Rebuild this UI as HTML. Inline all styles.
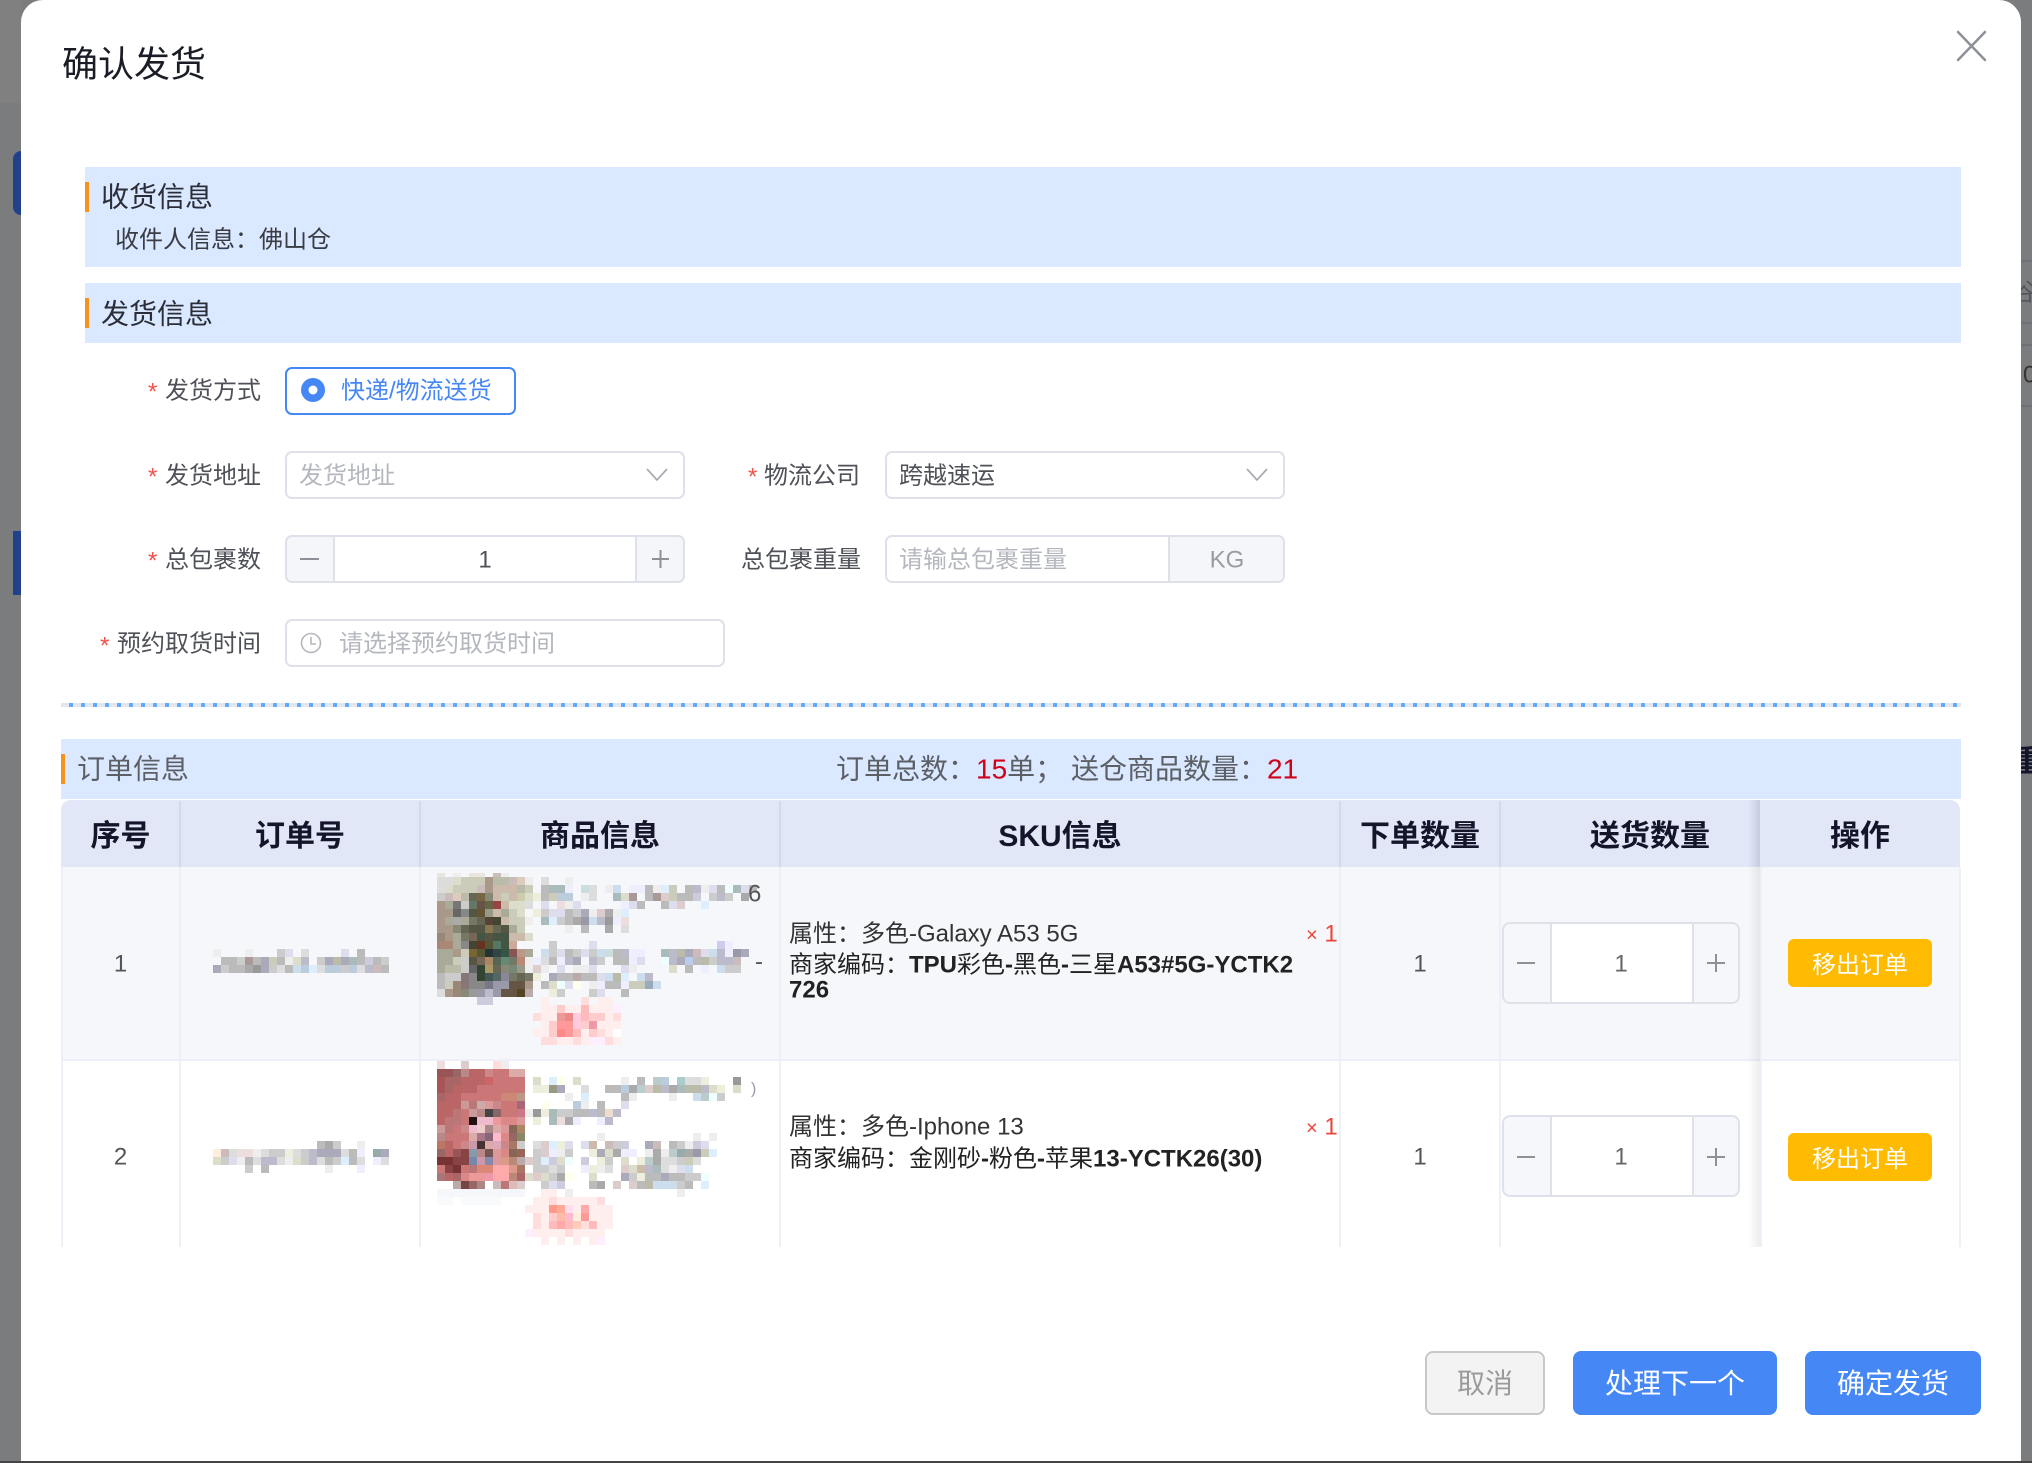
<!DOCTYPE html>
<html lang="zh-CN"><head><meta charset="utf-8"><title>确认发货</title>
<style>
*{box-sizing:border-box}
html,body{margin:0;padding:0}
body{width:2032px;height:1463px;position:relative;overflow:hidden;background:#7b7c7e;font-family:"Liberation Sans","Noto Sans CJK SC",sans-serif}
.a{position:absolute}
.t{position:absolute;white-space:nowrap;line-height:1;color:#4f5158;font-size:24px;transform:translateY(1.5px)}
.r{text-align:right}
.c{text-align:center}
.bar{position:absolute;background:#dae9ff}
.or{position:absolute;width:4px;height:30px;background:#f5941d}
.box{position:absolute;background:#fff;border:2.5px solid #dfe1ea;border-radius:7px}
.star{color:#f0524a}
.ph{color:#b5b7bf}
.th{position:absolute;top:821.5px;font-size:30px;font-weight:700;color:#14142b;line-height:30px;text-align:center;white-space:nowrap}
.sep{position:absolute;width:2px;top:801px;height:66px;background:#d3d9ea}
.col{position:absolute;width:2px;top:867px;height:380px;background:#eef0f7}
.btn{position:absolute;display:flex;align-items:center;justify-content:center;font-size:28px;border-radius:8px;color:#fff;background:#4687f6;padding-bottom:2px}
.ybtn{position:absolute;left:1788px;width:144px;height:48px;background:#febb02;border-radius:6px;color:#fff;font-size:24px;display:flex;align-items:center;justify-content:center;padding-bottom:2px}
.cnt{position:absolute;left:1502px;width:238px;height:82px;background:#f6f7fb;border:2.5px solid #dfe1ea;border-radius:8px;overflow:hidden}
.cnt i{position:absolute;left:46px;top:0;bottom:0;width:144px;background:#fff;border-left:2.5px solid #dfe1ea;border-right:2.5px solid #dfe1ea}
.m{position:absolute;left:437px;width:336px;height:186px;shape-rendering:crispEdges}
.m rect{width:1px;height:1px}
.n{position:absolute;left:213px;width:176px;height:32px;shape-rendering:crispEdges}
.n rect{width:1px;height:1px}
.sku b{font-weight:700;color:#222}
</style></head><body>

<div class="a" style="left:0;top:0;width:21px;height:103px;background:#808080"></div>
<div class="a" style="left:13px;top:151px;width:8px;height:64px;background:#23408a;border-radius:8px 0 0 8px"></div>
<div class="a" style="left:13px;top:531px;width:8px;height:64px;background:#23408a"></div>
<div class="a" style="left:2021px;top:260px;width:11px;height:2px;background:#6f7078"></div>
<div class="a" style="left:2021px;top:322px;width:11px;height:2px;background:#6f7078"></div>
<div class="a" style="left:2021px;top:344px;width:11px;height:2px;background:#6f7078"></div>
<div class="a" style="left:2021px;top:405px;width:11px;height:2px;background:#6f7078"></div>
<div class="t" style="left:2012px;top:280px;color:#55565a;font-size:24px">谷</div>
<div class="t" style="left:2023px;top:362px;color:#333;font-size:24px">0</div>
<div class="t" style="left:2012px;top:746px;color:#14142b;font-size:30px;font-weight:700">重</div>
<div class="a" style="left:0;top:1461px;width:2032px;height:2px;background:#444"></div>

<div class="a" style="left:21px;top:0;width:2000px;height:1461px;background:#fff;border-radius:22px 22px 0 0"></div>

<div class="t" style="left:62px;top:45px;font-size:36px;color:#1a1d26">确认发货</div>
<svg class="a" style="left:1950px;top:26px" width="42" height="42"><path d="M8 6 L35 34 M35 6 L8 34" stroke="#8d9096" stroke-width="2.5" fill="none" stroke-linecap="round"/></svg>

<div class="bar" style="left:85px;top:167px;width:1876px;height:100px"></div>
<div class="or" style="left:85px;top:182px"></div>
<div class="t" style="left:101px;top:182px;font-size:28px;color:#2b2e38">收货信息</div>
<div class="t" style="left:115px;top:227px;color:#3a3c45">收件人信息：佛山仓</div>

<div class="bar" style="left:85px;top:283px;width:1876px;height:60px"></div>
<div class="or" style="left:85px;top:298px"></div>
<div class="t" style="left:101px;top:299px;font-size:28px;color:#2b2e38">发货信息</div>

<div class="t" style="left:148px;top:379px"><span class="star">*</span></div>
<div class="t r" style="right:1771px;top:378px">发货方式</div>
<div class="a" style="left:285px;top:367px;width:231px;height:48px;border:2.5px solid #4687f6;border-radius:7px;background:#fff"></div>
<svg class="a" style="left:300px;top:377px" width="26" height="26"><circle cx="13" cy="13" r="12" fill="#4687f6"/><circle cx="13" cy="13" r="4.5" fill="#fff"/></svg>
<div class="t" style="left:341px;top:378px;color:#4687f6">快递/物流送货</div>

<div class="t" style="left:148px;top:464px"><span class="star">*</span></div>
<div class="t r" style="right:1771px;top:463px">发货地址</div>
<div class="box" style="left:285px;top:451px;width:400px;height:48px"></div>
<div class="t ph" style="left:299px;top:463px">发货地址</div>
<svg class="a" style="left:645px;top:466px" width="24" height="18"><path d="M2 3 L12 14 L22 3" stroke="#a9abb3" stroke-width="1.7" fill="none"/></svg>

<div class="t" style="left:748px;top:464px"><span class="star">*</span></div>
<div class="t r" style="right:1172px;top:463px">物流公司</div>
<div class="box" style="left:885px;top:451px;width:400px;height:48px"></div>
<div class="t" style="left:899px;top:463px;color:#4f5158">跨越速运</div>
<svg class="a" style="left:1245px;top:466px" width="24" height="18"><path d="M2 3 L12 14 L22 3" stroke="#a9abb3" stroke-width="1.7" fill="none"/></svg>

<div class="t" style="left:148px;top:548px"><span class="star">*</span></div>
<div class="t r" style="right:1771px;top:547px">总包裹数</div>
<div class="box" style="left:285px;top:535px;width:400px;height:48px;background:#f5f6fa;overflow:hidden"><div class="a" style="left:46px;top:0;bottom:0;width:304px;background:#fff;border-left:2.5px solid #dfe1ea;border-right:2.5px solid #dfe1ea"></div></div>
<svg class="a" style="left:300px;top:549px" width="370" height="20"><path d="M0 10H19M352 10H369M360.5 1V19" stroke="#8e9097" stroke-width="2" fill="none"/></svg>
<div class="t c" style="left:385px;width:200px;top:547px;color:#4f5158">1</div>

<div class="t r" style="right:1171px;top:547px">总包裹重量</div>
<div class="box" style="left:885px;top:535px;width:400px;height:48px;overflow:hidden"><div class="a" style="left:281px;top:0;bottom:0;right:0;background:#f5f6fa;border-left:2.5px solid #dfe1ea"></div></div>
<div class="t ph" style="left:899px;top:547px">请输总包裹重量</div>
<div class="t c" style="left:1170px;width:114px;top:547px;color:#9a9ca4">KG</div>

<div class="t" style="left:100px;top:633px"><span class="star">*</span></div>
<div class="t r" style="right:1771px;top:631px">预约取货时间</div>
<div class="box" style="left:285px;top:619px;width:440px;height:48px"></div>
<svg class="a" style="left:300px;top:632px" width="22" height="22"><circle cx="11" cy="11" r="9.5" stroke="#b5b7bf" stroke-width="1.6" fill="none"/><path d="M11 5V12H16" stroke="#b5b7bf" stroke-width="1.6" fill="none"/></svg>
<div class="t ph" style="left:339px;top:631px">请选择预约取货时间</div>

<div class="a" style="left:61px;top:703px;width:1900px;height:4px;background:repeating-linear-gradient(90deg,#e4e6ed 0,#e4e6ed 8px,#65a8ff 8px,#65a8ff 12px)"></div>

<div class="bar" style="left:61px;top:739px;width:1900px;height:60px"></div>
<div class="or" style="left:61px;top:754px"></div>
<div class="t" style="left:77px;top:754px;font-size:28px;color:#5c5f66">订单信息</div>
<div class="t" style="left:836px;top:754px;font-size:28px;color:#5c5f66">订单总数：<span style="color:#d0021b">15</span>单； 送仓商品数量：<span style="color:#d0021b">21</span></div>

<!-- table -->
<div class="a" style="left:61px;top:867px;width:1899px;height:193px;background:#f5f7fb"></div>
<div class="a" style="left:61px;top:1059px;width:1899px;height:2px;background:#eeeff6"></div>
<div class="a" style="left:61px;top:800px;width:1899px;height:67px;background:#e1e7f7;border-radius:10px 10px 0 0"></div>
<div class="a" style="left:1748px;top:800px;width:12px;height:67px;background:linear-gradient(90deg,rgba(150,155,180,0),rgba(150,155,180,.35))"></div>
<div class="a" style="left:1748px;top:867px;width:12px;height:380px;background:linear-gradient(90deg,rgba(0,0,0,0),rgba(0,0,0,.07))"></div>
<div class="sep" style="left:179px"></div><div class="sep" style="left:419px"></div><div class="sep" style="left:779px"></div><div class="sep" style="left:1339px"></div><div class="sep" style="left:1499px"></div>
<div class="col" style="left:61px"></div><div class="col" style="left:179px"></div><div class="col" style="left:419px"></div><div class="col" style="left:779px"></div><div class="col" style="left:1339px"></div><div class="col" style="left:1499px"></div><div class="col" style="left:1760px"></div><div class="col" style="left:1959px"></div>

<div class="th" style="left:61px;width:119px">序号</div>
<div class="th" style="left:180px;width:240px">订单号</div>
<div class="th" style="left:420px;width:360px">商品信息</div>
<div class="th" style="left:780px;width:560px">SKU信息</div>
<div class="th" style="left:1340px;width:160px">下单数量</div>
<div class="th" style="left:1500px;width:300px">送货数量</div>
<div class="th" style="left:1760px;width:200px">操作</div>

<div class="t c" style="left:61px;width:119px;top:951px;color:#555">1</div>
<div class="t c" style="left:61px;width:119px;top:1144px;color:#555">2</div>

<svg class="n" style="top:949px" viewBox="0 0 22 4"><g><rect x="0" fill="#eee"/><rect x="4" fill="#eee"/><rect x="8" fill="#ccc"/><rect x="9" fill="#dde"/><rect x="11" fill="#ddd"/><rect x="16" fill="#dde"/><rect x="18" fill="#bbb"/></g><g transform="translate(0 1)"><rect x="1" fill="#bbb"/><rect x="2" fill="#bbb"/><rect x="3" fill="#ccc"/><rect x="4" fill="#a99"/><rect x="5" fill="#bbb"/><rect x="6" fill="#aab"/><rect x="7" fill="#ccb"/><rect x="8" fill="#bbb"/><rect x="9" fill="#eee"/><rect x="10" fill="#ddc"/><rect x="11" fill="#bbc"/><rect x="13" fill="#ccc"/><rect x="14" fill="#aab"/><rect x="15" fill="#bba"/><rect x="16" fill="#aab"/><rect x="17" fill="#abb"/><rect x="18" fill="#bbb"/><rect x="19" fill="#ccd"/><rect x="20" fill="#bbb"/><rect x="21" fill="#ccc"/></g><g transform="translate(0 2)"><rect x="0" fill="#aab"/><rect x="1" fill="#ccc"/><rect x="2" fill="#bbb"/><rect x="3" fill="#bbb"/><rect x="4" fill="#aaa"/><rect x="5" fill="#999"/><rect x="6" fill="#aab"/><rect x="7" fill="#ccc"/><rect x="8" fill="#ddd"/><rect x="9" fill="#bbb"/><rect x="10" fill="#cde"/><rect x="11" fill="#bcd"/><rect x="12" fill="#def"/><rect x="13" fill="#ddd"/><rect x="14" fill="#bcd"/><rect x="15" fill="#bcd"/><rect x="16" fill="#ccc"/><rect x="17" fill="#bcd"/><rect x="18" fill="#ddd"/><rect x="19" fill="#bbc"/><rect x="20" fill="#cbb"/><rect x="21" fill="#bbb"/></g></svg>

<svg class="n" style="top:1141px" viewBox="0 0 22 4"><g><rect x="13" fill="#bbb"/><rect x="14" fill="#aaa"/><rect x="15" fill="#ccc"/><rect x="18" fill="#eee"/></g><g transform="translate(0 1)"><rect x="0" fill="#fed"/><rect x="1" fill="#cbb"/><rect x="2" fill="#ddd"/><rect x="3" fill="#edd"/><rect x="4" fill="#edd"/><rect x="5" fill="#eee"/><rect x="6" fill="#ddd"/><rect x="7" fill="#ccc"/><rect x="8" fill="#ccc"/><rect x="9" fill="#eed"/><rect x="10" fill="#ddd"/><rect x="11" fill="#ccc"/><rect x="12" fill="#bbc"/><rect x="13" fill="#aab"/><rect x="14" fill="#aab"/><rect x="15" fill="#aab"/><rect x="16" fill="#ddd"/><rect x="17" fill="#bbb"/><rect x="18" fill="#eef"/><rect x="20" fill="#9aa"/><rect x="21" fill="#aab"/></g><g transform="translate(0 2)"><rect x="0" fill="#ddc"/><rect x="1" fill="#ccc"/><rect x="2" fill="#dde"/><rect x="3" fill="#eee"/><rect x="4" fill="#bbb"/><rect x="5" fill="#ddd"/><rect x="6" fill="#bbc"/><rect x="7" fill="#bbc"/><rect x="8" fill="#ddd"/><rect x="9" fill="#eee"/><rect x="10" fill="#ddc"/><rect x="11" fill="#ccc"/><rect x="12" fill="#bbc"/><rect x="13" fill="#ddd"/><rect x="14" fill="#bbb"/><rect x="15" fill="#ccc"/><rect x="16" fill="#def"/><rect x="17" fill="#bbb"/><rect x="18" fill="#ddd"/><rect x="20" fill="#eef"/><rect x="21" fill="#ddd"/></g><g transform="translate(0 3)"><rect x="4" fill="#ccc"/><rect x="6" fill="#bbb"/><rect x="14" fill="#eee"/><rect x="18" fill="#eef"/></g></svg>

<!-- row 1 product -->
<svg class="m" style="top:861px" viewBox="0 0 42 23.25">
<g transform="translate(0 1.5)"><rect style="height:.5px" x="0" fill="#e8e6e0"/><rect style="height:.5px" x="2" fill="#eee"/><rect style="height:.5px" x="4" fill="#e8e6df"/><rect style="height:.5px" x="5" fill="#e8e6df"/><rect style="height:.5px" x="7" fill="#c8c0b8"/><rect style="height:.5px" x="8" fill="#eee"/></g>
<g transform="translate(0 2)"><rect x="0" fill="#ddd"/><rect x="1" fill="#ddd"/><rect x="2" fill="#ddc"/><rect x="3" fill="#ccb"/><rect x="4" fill="#ccb"/><rect x="5" fill="#ccb"/><rect x="6" fill="#a98"/><rect x="7" fill="#bba"/><rect x="8" fill="#bba"/><rect x="9" fill="#cbb"/><rect x="10" fill="#dcb"/><rect x="11" fill="#eee"/><rect x="13" fill="#ddd"/><rect x="16" fill="#eee"/></g>
<g transform="translate(0 3)"><rect x="0" fill="#ddd"/><rect x="1" fill="#ddc"/><rect x="2" fill="#ccb"/><rect x="3" fill="#ccb"/><rect x="4" fill="#ccb"/><rect x="5" fill="#cbb"/><rect x="6" fill="#a98"/><rect x="7" fill="#cba"/><rect x="8" fill="#cba"/><rect x="9" fill="#cba"/><rect x="10" fill="#bba"/><rect x="11" fill="#ccb"/><rect x="13" fill="#bbb"/><rect x="14" fill="#abb"/><rect x="15" fill="#abb"/><rect x="16" fill="#eef"/><rect x="18" fill="#cdd"/><rect x="19" fill="#ddd"/><rect x="21" fill="#eee"/><rect x="22" fill="#cde"/><rect x="24" fill="#eef"/><rect x="25" fill="#eef"/><rect x="26" fill="#bbb"/><rect x="27" fill="#eee"/><rect x="28" fill="#def"/><rect x="29" fill="#ccb"/><rect x="31" fill="#bbb"/><rect x="32" fill="#bbc"/><rect x="33" fill="#eee"/><rect x="34" fill="#dde"/><rect x="35" fill="#bbb"/><rect x="36" fill="#eff"/><rect x="37" fill="#abb"/><rect x="38" fill="#dde"/><rect x="39" fill="#bbb"/></g>
<g transform="translate(0 4)"><rect x="0" fill="#ccc"/><rect x="1" fill="#cbb"/><rect x="2" fill="#dcb"/><rect x="3" fill="#bba"/><rect x="4" fill="#665"/><rect x="5" fill="#764"/><rect x="6" fill="#887"/><rect x="7" fill="#cba"/><rect x="8" fill="#ccb"/><rect x="9" fill="#cba"/><rect x="10" fill="#cca"/><rect x="11" fill="#ddc"/><rect x="12" fill="#eed"/><rect x="13" fill="#bbb"/><rect x="14" fill="#ccb"/><rect x="15" fill="#bcd"/><rect x="16" fill="#bcd"/><rect x="18" fill="#eee"/><rect x="19" fill="#ddd"/><rect x="22" fill="#abb"/><rect x="23" fill="#ddc"/><rect x="24" fill="#a99"/><rect x="26" fill="#bbb"/><rect x="27" fill="#a99"/><rect x="28" fill="#dcc"/><rect x="29" fill="#ccb"/><rect x="30" fill="#bbb"/><rect x="31" fill="#bbb"/><rect x="32" fill="#ccd"/><rect x="34" fill="#ccc"/><rect x="35" fill="#bbc"/><rect x="36" fill="#ccc"/><rect x="38" fill="#aaa"/></g>
<g transform="translate(0 5)"><rect x="0" fill="#a98"/><rect x="1" fill="#aa9"/><rect x="2" fill="#777"/><rect x="3" fill="#ccc"/><rect x="4" fill="#676"/><rect x="5" fill="#654"/><rect x="6" fill="#664"/><rect x="7" fill="#944"/><rect x="8" fill="#cba"/><rect x="9" fill="#ddc"/><rect x="10" fill="#ddc"/><rect x="11" fill="#ddd"/><rect x="13" fill="#dde"/><rect x="15" fill="#edd"/><rect x="16" fill="#eee"/><rect x="17" fill="#dde"/><rect x="23" fill="#eef"/><rect x="24" fill="#dde"/><rect x="25" fill="#bbb"/><rect x="28" fill="#bbb"/><rect x="29" fill="#dde"/><rect x="30" fill="#dcc"/><rect x="33" fill="#def"/></g>
<g transform="translate(0 6)"><rect x="0" fill="#a98"/><rect x="1" fill="#a98"/><rect x="2" fill="#666"/><rect x="3" fill="#888"/><rect x="4" fill="#554"/><rect x="5" fill="#653"/><rect x="6" fill="#998"/><rect x="7" fill="#cba"/><rect x="8" fill="#aa9"/><rect x="9" fill="#ccb"/><rect x="10" fill="#ddc"/><rect x="12" fill="#eed"/><rect x="13" fill="#ccc"/><rect x="14" fill="#dde"/><rect x="15" fill="#dde"/><rect x="16" fill="#bbb"/><rect x="17" fill="#ccc"/><rect x="18" fill="#aab"/><rect x="19" fill="#eee"/><rect x="20" fill="#dcc"/><rect x="21" fill="#aaa"/><rect x="22" fill="#eee"/><rect x="23" fill="#def"/></g>
<g transform="translate(0 7)"><rect x="0" fill="#a98"/><rect x="1" fill="#aa9"/><rect x="2" fill="#aaa"/><rect x="3" fill="#aa9"/><rect x="4" fill="#776"/><rect x="5" fill="#665"/><rect x="6" fill="#543"/><rect x="7" fill="#443"/><rect x="8" fill="#cba"/><rect x="9" fill="#ccb"/><rect x="10" fill="#ccb"/><rect x="11" fill="#eee"/><rect x="13" fill="#abb"/><rect x="14" fill="#def"/><rect x="15" fill="#ccc"/><rect x="16" fill="#bbb"/><rect x="17" fill="#aaa"/><rect x="18" fill="#99a"/><rect x="19" fill="#cde"/><rect x="20" fill="#bbc"/><rect x="21" fill="#999"/><rect x="22" fill="#eef"/><rect x="23" fill="#edd"/></g>
<g transform="translate(0 8)"><rect x="0" fill="#a98"/><rect x="1" fill="#a98"/><rect x="2" fill="#887"/><rect x="3" fill="#665"/><rect x="4" fill="#554"/><rect x="5" fill="#554"/><rect x="6" fill="#875"/><rect x="7" fill="#665"/><rect x="8" fill="#554"/><rect x="9" fill="#aa9"/><rect x="10" fill="#ccb"/><rect x="16" fill="#eee"/><rect x="18" fill="#bbb"/><rect x="21" fill="#aaa"/><rect x="23" fill="#ddd"/></g>
<g transform="translate(0 9)"><rect x="0" fill="#987"/><rect x="1" fill="#a98"/><rect x="2" fill="#aa9"/><rect x="3" fill="#776"/><rect x="4" fill="#765"/><rect x="5" fill="#454"/><rect x="6" fill="#554"/><rect x="7" fill="#454"/><rect x="8" fill="#454"/><rect x="9" fill="#cba"/><rect x="10" fill="#cba"/><rect x="11" fill="#ddc"/></g>
<g transform="translate(0 10)"><rect x="0" fill="#a87"/><rect x="1" fill="#a87"/><rect x="2" fill="#aa9"/><rect x="3" fill="#888"/><rect x="4" fill="#443"/><rect x="5" fill="#632"/><rect x="6" fill="#553"/><rect x="7" fill="#576"/><rect x="8" fill="#454"/><rect x="9" fill="#ca9"/><rect x="14" fill="#ccc"/><rect x="19" fill="#dde"/><rect x="35" fill="#cce"/><rect x="36" fill="#eef"/></g>
<g transform="translate(0 11)"><rect x="0" fill="#aa9"/><rect x="1" fill="#aa9"/><rect x="2" fill="#a98"/><rect x="3" fill="#ccb"/><rect x="4" fill="#763"/><rect x="5" fill="#553"/><rect x="6" fill="#233"/><rect x="7" fill="#344"/><rect x="8" fill="#354"/><rect x="9" fill="#855"/><rect x="10" fill="#b98"/><rect x="11" fill="#aa9"/><rect x="13" fill="#cde"/><rect x="14" fill="#ccc"/><rect x="15" fill="#dde"/><rect x="16" fill="#bbb"/><rect x="17" fill="#ccc"/><rect x="18" fill="#dde"/><rect x="19" fill="#ccc"/><rect x="20" fill="#cde"/><rect x="21" fill="#cdd"/><rect x="22" fill="#bbb"/><rect x="23" fill="#bbc"/><rect x="24" fill="#eef"/><rect x="25" fill="#eef"/><rect x="28" fill="#abb"/><rect x="29" fill="#bbc"/><rect x="30" fill="#bba"/><rect x="31" fill="#aab"/><rect x="32" fill="#cbb"/><rect x="33" fill="#dde"/><rect x="34" fill="#cde"/><rect x="35" fill="#bbc"/><rect x="36" fill="#eef"/><rect x="37" fill="#99a"/><rect x="38" fill="#aab"/></g>
<g transform="translate(0 12)"><rect x="0" fill="#aa9"/><rect x="1" fill="#aa9"/><rect x="2" fill="#ccb"/><rect x="3" fill="#ccc"/><rect x="4" fill="#554"/><rect x="5" fill="#765"/><rect x="6" fill="#a86"/><rect x="7" fill="#565"/><rect x="8" fill="#687"/><rect x="9" fill="#776"/><rect x="10" fill="#b87"/><rect x="11" fill="#eee"/><rect x="12" fill="#eef"/><rect x="13" fill="#ddd"/><rect x="14" fill="#bbb"/><rect x="15" fill="#eef"/><rect x="16" fill="#bbc"/><rect x="17" fill="#aab"/><rect x="19" fill="#bbc"/><rect x="20" fill="#ccc"/><rect x="22" fill="#bbb"/><rect x="23" fill="#bbb"/><rect x="24" fill="#eef"/><rect x="25" fill="#dde"/><rect x="28" fill="#eff"/><rect x="29" fill="#bbc"/><rect x="30" fill="#aab"/><rect x="31" fill="#bce"/><rect x="32" fill="#bbb"/><rect x="33" fill="#bba"/><rect x="34" fill="#ccc"/><rect x="35" fill="#bbc"/><rect x="36" fill="#bbc"/><rect x="37" fill="#cbb"/></g>
<g transform="translate(0 13)"><rect x="0" fill="#aa9"/><rect x="1" fill="#bba"/><rect x="2" fill="#bba"/><rect x="3" fill="#ccc"/><rect x="4" fill="#666"/><rect x="5" fill="#343"/><rect x="6" fill="#a96"/><rect x="7" fill="#665"/><rect x="8" fill="#887"/><rect x="9" fill="#787"/><rect x="10" fill="#998"/><rect x="11" fill="#eee"/><rect x="12" fill="#dcc"/><rect x="13" fill="#eee"/><rect x="15" fill="#dde"/><rect x="17" fill="#eee"/><rect x="18" fill="#eee"/><rect x="19" fill="#dde"/><rect x="23" fill="#dde"/><rect x="24" fill="#eee"/><rect x="29" fill="#ddc"/><rect x="31" fill="#bbb"/><rect x="33" fill="#eef"/><rect x="35" fill="#cde"/><rect x="36" fill="#ccc"/><rect x="37" fill="#ccc"/></g>
<g transform="translate(0 14)"><rect x="0" fill="#bbb"/><rect x="1" fill="#ccc"/><rect x="2" fill="#ccc"/><rect x="3" fill="#877"/><rect x="4" fill="#888"/><rect x="5" fill="#343"/><rect x="6" fill="#455"/><rect x="7" fill="#566"/><rect x="8" fill="#889"/><rect x="9" fill="#776"/><rect x="10" fill="#665"/><rect x="11" fill="#776"/><rect x="12" fill="#eed"/><rect x="14" fill="#aab"/><rect x="15" fill="#bbb"/><rect x="16" fill="#bbb"/><rect x="17" fill="#baa"/><rect x="18" fill="#bbb"/><rect x="19" fill="#bbb"/><rect x="20" fill="#dde"/><rect x="21" fill="#cde"/><rect x="22" fill="#bba"/><rect x="23" fill="#def"/><rect x="25" fill="#cde"/><rect x="26" fill="#bbc"/></g>
<g transform="translate(0 15)"><rect x="0" fill="#bbb"/><rect x="1" fill="#ccb"/><rect x="2" fill="#987"/><rect x="3" fill="#877"/><rect x="4" fill="#888"/><rect x="5" fill="#888"/><rect x="6" fill="#778"/><rect x="7" fill="#99a"/><rect x="8" fill="#99a"/><rect x="9" fill="#654"/><rect x="10" fill="#654"/><rect x="11" fill="#a98"/><rect x="13" fill="#bbb"/><rect x="14" fill="#ddc"/><rect x="15" fill="#eff"/><rect x="16" fill="#dde"/><rect x="17" fill="#ffe"/><rect x="19" fill="#eee"/><rect x="20" fill="#eef"/><rect x="21" fill="#bbb"/><rect x="22" fill="#bbb"/><rect x="23" fill="#eef"/><rect x="24" fill="#ccb"/><rect x="25" fill="#ccb"/><rect x="26" fill="#9ab"/><rect x="27" fill="#cde"/></g>
<g transform="translate(0 16)"><rect x="0" fill="#ddd"/><rect x="1" fill="#a98"/><rect x="2" fill="#987"/><rect x="3" fill="#887"/><rect x="4" fill="#999"/><rect x="5" fill="#99a"/><rect x="6" fill="#bbc"/><rect x="7" fill="#99a"/><rect x="8" fill="#654"/><rect x="9" fill="#654"/><rect x="10" fill="#542"/><rect x="11" fill="#baa"/><rect x="14" fill="#eed"/><rect x="15" fill="#ccc"/><rect x="19" fill="#ccc"/><rect x="20" fill="#dde"/><rect x="23" fill="#bbb"/></g>
<g transform="translate(0 17)"><rect x="5" fill="#ccd"/><rect x="6" fill="#ccd"/><rect x="13" fill="#fee"/><rect x="18" fill="#fdd"/><rect x="20" fill="#fee"/><rect x="21" fill="#fee"/></g>
<g transform="translate(0 18)"><rect x="13" fill="#fee"/><rect x="14" fill="#fee"/><rect x="15" fill="#fcc"/><rect x="16" fill="#fee"/><rect x="17" fill="#fee"/><rect x="18" fill="#fbb"/><rect x="19" fill="#fee"/><rect x="20" fill="#fee"/><rect x="21" fill="#fee"/><rect x="22" fill="#fef"/></g>
<g transform="translate(0 19)"><rect x="12" fill="#fdd"/><rect x="13" fill="#fee"/><rect x="14" fill="#fee"/><rect x="15" fill="#e99"/><rect x="16" fill="#e88"/><rect x="17" fill="#fcd"/><rect x="18" fill="#fbb"/><rect x="19" fill="#fcc"/><rect x="20" fill="#fcc"/><rect x="21" fill="#fee"/><rect x="22" fill="#fdd"/></g>
<g transform="translate(0 20)"><rect x="13" fill="#fee"/><rect x="14" fill="#fcc"/><rect x="15" fill="#f99"/><rect x="16" fill="#f99"/><rect x="17" fill="#fcd"/><rect x="18" fill="#fcc"/><rect x="19" fill="#e9a"/><rect x="20" fill="#fee"/><rect x="21" fill="#fee"/><rect x="22" fill="#fee"/></g>
<g transform="translate(0 21)"><rect x="12" fill="#fee"/><rect x="13" fill="#fee"/><rect x="14" fill="#fcc"/><rect x="15" fill="#f88"/><rect x="16" fill="#f99"/><rect x="17" fill="#fbb"/><rect x="18" fill="#fee"/><rect x="19" fill="#fcc"/><rect x="20" fill="#fdd"/><rect x="21" fill="#fee"/><rect x="22" fill="#fff"/></g>
<g transform="translate(0 22)"><rect x="13" fill="#fdd"/><rect x="14" fill="#fdd"/><rect x="15" fill="#fee"/><rect x="16" fill="#fee"/><rect x="17" fill="#fdd"/><rect x="18" fill="#fee"/><rect x="19" fill="#fef"/><rect x="20" fill="#fef"/><rect x="21" fill="#fdd"/><rect x="22" fill="#fee"/></g>
</svg>
<div class="t" style="left:748px;top:881px;color:#555">6</div>
<div class="t" style="left:755px;top:949px;color:#555">-</div>

<!-- row 2 product -->
<svg class="m" style="top:1061px" viewBox="0 0 42 23.25">
<g><rect x="0" fill="#edd"/><rect x="3" fill="#dcc"/><rect x="7" fill="#fdd"/><rect x="8" fill="#eee"/></g>
<g transform="translate(0 1)"><rect x="0" fill="#955"/><rect x="1" fill="#955"/><rect x="2" fill="#966"/><rect x="3" fill="#b88"/><rect x="4" fill="#b66"/><rect x="5" fill="#b66"/><rect x="6" fill="#c88"/><rect x="7" fill="#c77"/><rect x="8" fill="#c77"/><rect x="9" fill="#daa"/><rect x="10" fill="#daa"/></g>
<g transform="translate(0 2)"><rect x="0" fill="#a55"/><rect x="1" fill="#a66"/><rect x="2" fill="#a66"/><rect x="3" fill="#b66"/><rect x="4" fill="#b66"/><rect x="5" fill="#b66"/><rect x="6" fill="#c66"/><rect x="7" fill="#c77"/><rect x="8" fill="#c77"/><rect x="9" fill="#c77"/><rect x="10" fill="#c77"/><rect x="12" fill="#ddc"/><rect x="14" fill="#def"/><rect x="15" fill="#ffe"/><rect x="17" fill="#ddc"/><rect x="23" fill="#eee"/><rect x="25" fill="#bbb"/><rect x="27" fill="#bcc"/><rect x="28" fill="#bcd"/><rect x="30" fill="#acc"/><rect x="31" fill="#ddd"/><rect x="32" fill="#ddd"/><rect x="33" fill="#eed"/><rect x="37" fill="#999"/></g>
<g transform="translate(0 3)"><rect x="0" fill="#a55"/><rect x="1" fill="#a66"/><rect x="2" fill="#b66"/><rect x="3" fill="#b66"/><rect x="4" fill="#b66"/><rect x="5" fill="#c77"/><rect x="6" fill="#c77"/><rect x="7" fill="#c77"/><rect x="8" fill="#c77"/><rect x="9" fill="#c77"/><rect x="10" fill="#c77"/><rect x="12" fill="#eed"/><rect x="13" fill="#eed"/><rect x="14" fill="#998"/><rect x="15" fill="#aab"/><rect x="18" fill="#ddd"/><rect x="21" fill="#bbb"/><rect x="22" fill="#bbb"/><rect x="23" fill="#bcd"/><rect x="24" fill="#aaa"/><rect x="25" fill="#bcc"/><rect x="26" fill="#dcc"/><rect x="27" fill="#bba"/><rect x="28" fill="#bbc"/><rect x="29" fill="#aaa"/><rect x="30" fill="#abb"/><rect x="31" fill="#bba"/><rect x="32" fill="#bba"/><rect x="33" fill="#bbc"/><rect x="34" fill="#ddc"/><rect x="35" fill="#eed"/><rect x="37" fill="#ddc"/></g>
<g transform="translate(0 4)"><rect x="0" fill="#a66"/><rect x="1" fill="#b66"/><rect x="2" fill="#b66"/><rect x="3" fill="#c77"/><rect x="4" fill="#c77"/><rect x="5" fill="#c77"/><rect x="6" fill="#c77"/><rect x="7" fill="#c77"/><rect x="8" fill="#c87"/><rect x="9" fill="#c87"/><rect x="10" fill="#b98"/><rect x="16" fill="#eee"/><rect x="18" fill="#def"/><rect x="23" fill="#bbb"/><rect x="24" fill="#eee"/><rect x="29" fill="#eee"/><rect x="32" fill="#cde"/><rect x="33" fill="#bcc"/><rect x="34" fill="#eff"/><rect x="35" fill="#ccc"/></g>
<g transform="translate(0 5)"><rect x="0" fill="#b66"/><rect x="1" fill="#b66"/><rect x="2" fill="#b66"/><rect x="3" fill="#c99"/><rect x="4" fill="#b77"/><rect x="5" fill="#caa"/><rect x="6" fill="#d99"/><rect x="7" fill="#c88"/><rect x="8" fill="#c77"/><rect x="9" fill="#c77"/><rect x="10" fill="#a67"/><rect x="13" fill="#ffe"/><rect x="17" fill="#bcd"/><rect x="18" fill="#eee"/><rect x="20" fill="#bbb"/><rect x="23" fill="#dde"/></g>
<g transform="translate(0 6)"><rect x="0" fill="#b66"/><rect x="1" fill="#b66"/><rect x="2" fill="#b77"/><rect x="3" fill="#c77"/><rect x="4" fill="#c99"/><rect x="5" fill="#b88"/><rect x="6" fill="#444"/><rect x="7" fill="#866"/><rect x="8" fill="#c77"/><rect x="9" fill="#c77"/><rect x="10" fill="#c78"/><rect x="11" fill="#eee"/><rect x="12" fill="#999"/><rect x="13" fill="#eed"/><rect x="14" fill="#abb"/><rect x="15" fill="#ccc"/><rect x="16" fill="#ccc"/><rect x="17" fill="#bbb"/><rect x="18" fill="#bbb"/><rect x="19" fill="#bbc"/><rect x="20" fill="#bbb"/><rect x="21" fill="#edc"/><rect x="22" fill="#bbc"/></g>
<g transform="translate(0 7)"><rect x="0" fill="#b66"/><rect x="1" fill="#b77"/><rect x="2" fill="#b77"/><rect x="3" fill="#c77"/><rect x="4" fill="#211"/><rect x="5" fill="#ebc"/><rect x="6" fill="#ebc"/><rect x="7" fill="#e99"/><rect x="8" fill="#d88"/><rect x="9" fill="#d88"/><rect x="10" fill="#d99"/><rect x="12" fill="#eed"/><rect x="14" fill="#abb"/><rect x="15" fill="#edd"/><rect x="16" fill="#aaa"/><rect x="17" fill="#eef"/><rect x="20" fill="#eef"/><rect x="21" fill="#bbc"/></g>
<g transform="translate(0 8)"><rect x="0" fill="#c99"/><rect x="1" fill="#b77"/><rect x="2" fill="#c77"/><rect x="3" fill="#c88"/><rect x="4" fill="#ebc"/><rect x="5" fill="#ecc"/><rect x="6" fill="#a88"/><rect x="7" fill="#daa"/><rect x="8" fill="#d99"/><rect x="9" fill="#865"/><rect x="10" fill="#a86"/></g>
<g transform="translate(0 9)"><rect x="0" fill="#b88"/><rect x="1" fill="#c77"/><rect x="2" fill="#c77"/><rect x="3" fill="#c77"/><rect x="4" fill="#daa"/><rect x="5" fill="#a78"/><rect x="6" fill="#867"/><rect x="7" fill="#fbc"/><rect x="8" fill="#d88"/><rect x="9" fill="#966"/><rect x="10" fill="#886"/><rect x="20" fill="#eee"/><rect x="32" fill="#eee"/><rect x="34" fill="#eee"/></g>
<g transform="translate(0 10)"><rect x="0" fill="#b76"/><rect x="1" fill="#b66"/><rect x="2" fill="#c77"/><rect x="3" fill="#c88"/><rect x="4" fill="#c9a"/><rect x="5" fill="#433"/><rect x="6" fill="#daa"/><rect x="7" fill="#dab"/><rect x="8" fill="#c88"/><rect x="9" fill="#a76"/><rect x="10" fill="#ccc"/><rect x="12" fill="#ddd"/><rect x="13" fill="#dcc"/><rect x="14" fill="#def"/><rect x="15" fill="#eed"/><rect x="16" fill="#dde"/><rect x="18" fill="#dde"/><rect x="19" fill="#cba"/><rect x="21" fill="#cbb"/><rect x="22" fill="#ccc"/><rect x="23" fill="#ccd"/><rect x="26" fill="#aab"/><rect x="27" fill="#cbb"/><rect x="29" fill="#bbb"/><rect x="30" fill="#ccc"/><rect x="31" fill="#eee"/><rect x="32" fill="#ccd"/><rect x="33" fill="#dde"/></g>
<g transform="translate(0 11)"><rect x="0" fill="#966"/><rect x="1" fill="#b66"/><rect x="2" fill="#955"/><rect x="3" fill="#844"/><rect x="4" fill="#89a"/><rect x="5" fill="#b88"/><rect x="6" fill="#755"/><rect x="7" fill="#d99"/><rect x="8" fill="#d88"/><rect x="9" fill="#865"/><rect x="10" fill="#965"/><rect x="12" fill="#ccc"/><rect x="13" fill="#dcc"/><rect x="14" fill="#eef"/><rect x="15" fill="#eee"/><rect x="16" fill="#ccc"/><rect x="19" fill="#eed"/><rect x="20" fill="#aab"/><rect x="21" fill="#ddc"/><rect x="22" fill="#aaa"/><rect x="23" fill="#eef"/><rect x="24" fill="#eef"/><rect x="26" fill="#eee"/><rect x="27" fill="#aaa"/><rect x="28" fill="#eee"/><rect x="29" fill="#bcc"/><rect x="30" fill="#9aa"/><rect x="31" fill="#aaa"/><rect x="32" fill="#99a"/><rect x="33" fill="#ccb"/><rect x="34" fill="#def"/></g>
<g transform="translate(0 12)"><rect x="0" fill="#733"/><rect x="1" fill="#733"/><rect x="2" fill="#844"/><rect x="3" fill="#844"/><rect x="4" fill="#78a"/><rect x="5" fill="#c9a"/><rect x="6" fill="#88a"/><rect x="7" fill="#d99"/><rect x="8" fill="#d98"/><rect x="9" fill="#b87"/><rect x="10" fill="#baa"/><rect x="11" fill="#dcc"/><rect x="12" fill="#ccc"/><rect x="13" fill="#def"/><rect x="14" fill="#ccd"/><rect x="15" fill="#ddc"/><rect x="16" fill="#eff"/><rect x="18" fill="#ccd"/><rect x="20" fill="#eed"/><rect x="21" fill="#ccc"/><rect x="23" fill="#ddc"/><rect x="25" fill="#eed"/><rect x="26" fill="#bcc"/><rect x="27" fill="#aaa"/><rect x="28" fill="#ddd"/><rect x="29" fill="#ddd"/><rect x="30" fill="#ccc"/><rect x="31" fill="#ccb"/><rect x="32" fill="#ddd"/></g>
<g transform="translate(0 13)"><rect x="0" fill="#c77"/><rect x="1" fill="#844"/><rect x="2" fill="#733"/><rect x="3" fill="#c77"/><rect x="4" fill="#b77"/><rect x="5" fill="#d87"/><rect x="6" fill="#d87"/><rect x="7" fill="#faa"/><rect x="8" fill="#faa"/><rect x="9" fill="#d98"/><rect x="10" fill="#a76"/><rect x="12" fill="#ccc"/><rect x="13" fill="#ccc"/><rect x="14" fill="#ddd"/><rect x="15" fill="#ccc"/><rect x="18" fill="#eef"/><rect x="19" fill="#eed"/><rect x="20" fill="#eee"/><rect x="21" fill="#ddd"/><rect x="23" fill="#dcc"/><rect x="24" fill="#ddc"/><rect x="25" fill="#cba"/><rect x="26" fill="#bbc"/><rect x="27" fill="#abb"/><rect x="28" fill="#ddd"/><rect x="29" fill="#eee"/><rect x="30" fill="#dde"/><rect x="31" fill="#cde"/></g>
<g transform="translate(0 14)"><rect x="0" fill="#a77"/><rect x="1" fill="#b66"/><rect x="2" fill="#a66"/><rect x="3" fill="#d88"/><rect x="4" fill="#e99"/><rect x="5" fill="#e99"/><rect x="6" fill="#e9a"/><rect x="7" fill="#faa"/><rect x="8" fill="#faa"/><rect x="9" fill="#b87"/><rect x="10" fill="#a66"/><rect x="11" fill="#ddc"/><rect x="12" fill="#dcc"/><rect x="13" fill="#ddc"/><rect x="14" fill="#ccc"/><rect x="15" fill="#aaa"/><rect x="16" fill="#ffe"/><rect x="19" fill="#ddc"/><rect x="23" fill="#aab"/><rect x="24" fill="#ccc"/><rect x="25" fill="#eed"/><rect x="26" fill="#bbb"/><rect x="27" fill="#bbb"/><rect x="28" fill="#aab"/><rect x="29" fill="#bbb"/><rect x="30" fill="#bbb"/><rect x="31" fill="#ccc"/><rect x="32" fill="#ccc"/><rect x="33" fill="#eff"/></g>
<g transform="translate(0 15)"><rect x="2" fill="#baa"/><rect x="3" fill="#744"/><rect x="4" fill="#966"/><rect x="5" fill="#a88"/><rect x="7" fill="#cbb"/><rect x="8" fill="#b77"/><rect x="9" fill="#dbb"/><rect x="10" fill="#dcc"/><rect x="13" fill="#ccc"/><rect x="14" fill="#dde"/><rect x="15" fill="#ccd"/><rect x="19" fill="#bbb"/><rect x="20" fill="#aaa"/><rect x="22" fill="#dcc"/><rect x="24" fill="#dcc"/><rect x="25" fill="#bbb"/><rect x="26" fill="#bba"/><rect x="27" fill="#cde"/><rect x="28" fill="#cde"/><rect x="29" fill="#cde"/><rect x="30" fill="#ccc"/><rect x="31" fill="#bbb"/><rect x="33" fill="#def"/></g>
<g transform="translate(0 16)"><rect x="0" fill="#f6f7fb"/><rect x="1" fill="#f6f7fb"/><rect x="2" fill="#f6f7fb"/><rect x="3" fill="#f6f7fb"/><rect x="4" fill="#f6f7fb"/><rect x="5" fill="#f6f7fb"/><rect x="6" fill="#f6f7fb"/><rect x="7" fill="#f6f7fb"/><rect x="8" fill="#f6f7fb"/><rect x="9" fill="#f6f7fb"/><rect x="10" fill="#f6f7fb"/><rect x="13" fill="#fee"/><rect x="14" fill="#fee"/><rect x="16" fill="#eee"/><rect x="30" fill="#eee"/></g>
<g transform="translate(0 17)"><rect x="0" fill="#f9fafc"/><rect x="1" fill="#f9fafc"/><rect x="3" fill="#f9fafc"/><rect x="4" fill="#f9fafc"/><rect x="5" fill="#f9fafc"/><rect x="6" fill="#f9fafc"/><rect x="7" fill="#f9fafc"/><rect x="12" fill="#fee"/><rect x="13" fill="#fee"/><rect x="14" fill="#fdd"/><rect x="15" fill="#fee"/><rect x="16" fill="#fee"/><rect x="17" fill="#fee"/><rect x="18" fill="#fee"/><rect x="19" fill="#fee"/><rect x="20" fill="#fdd"/></g>
<g transform="translate(0 18)"><rect x="11" fill="#fee"/><rect x="12" fill="#fee"/><rect x="13" fill="#fee"/><rect x="14" fill="#f98"/><rect x="15" fill="#fa9"/><rect x="16" fill="#fde"/><rect x="17" fill="#fee"/><rect x="18" fill="#faa"/><rect x="19" fill="#fee"/><rect x="20" fill="#fee"/><rect x="21" fill="#fee"/></g>
<g transform="translate(0 19)"><rect x="12" fill="#fdd"/><rect x="13" fill="#fee"/><rect x="14" fill="#fcc"/><rect x="15" fill="#fba"/><rect x="16" fill="#fbc"/><rect x="17" fill="#fed"/><rect x="18" fill="#f99"/><rect x="19" fill="#fee"/><rect x="20" fill="#fee"/><rect x="21" fill="#fee"/></g>
<g transform="translate(0 20)"><rect x="12" fill="#fdd"/><rect x="13" fill="#fee"/><rect x="14" fill="#fbb"/><rect x="15" fill="#faa"/><rect x="16" fill="#fbb"/><rect x="17" fill="#fcb"/><rect x="18" fill="#fdd"/><rect x="19" fill="#fbb"/><rect x="20" fill="#fee"/><rect x="21" fill="#fee"/></g>
<g transform="translate(0 21)"><rect x="11" fill="#fef"/><rect x="12" fill="#fee"/><rect x="13" fill="#fee"/><rect x="14" fill="#fee"/><rect x="15" fill="#fee"/><rect x="16" fill="#fdd"/><rect x="17" fill="#fee"/><rect x="18" fill="#fee"/><rect x="19" fill="#fee"/><rect x="20" fill="#fee"/></g>
<g transform="translate(0 22)"><rect x="13" fill="#fee"/><rect x="15" fill="#fee"/><rect x="17" fill="#fee"/><rect x="19" fill="#fee"/><rect x="20" fill="#fef"/></g>
</svg>
<div class="t" style="left:751px;top:1080px;color:#99a;font-size:16px">)</div>

<!-- SKU -->
<div class="t sku" style="left:789px;top:921px;color:#333">属性：多色-Galaxy A53 5G</div>
<div class="t sku" style="left:789px;top:952px;color:#222">商家编码：<b>TPU</b>彩色<b>-</b>黑色<b>-</b>三星<b>A53#5G-YCTK2</b></div>
<div class="t sku" style="left:789px;top:977px;color:#222;line-height:24px"><b>726</b></div>
<div class="t" style="left:1306px;top:921px;color:#e8483c"><span style="font-size:20px">×</span> 1</div>

<div class="t sku" style="left:789px;top:1114px;color:#333">属性：多色-Iphone 13</div>
<div class="t sku" style="left:789px;top:1146px;color:#222">商家编码：金刚砂<b>-</b>粉色<b>-</b>苹果<b>13-YCTK26(30)</b></div>
<div class="t" style="left:1306px;top:1114px;color:#e8483c"><span style="font-size:20px">×</span> 1</div>

<div class="t c" style="left:1340px;width:160px;top:951px;color:#555">1</div>
<div class="t c" style="left:1340px;width:160px;top:1144px;color:#555">1</div>

<div class="cnt" style="top:922px"><i></i></div>
<svg class="a" style="left:1517px;top:953px" width="212" height="20"><path d="M0 10H18M190 10H208M199 1V19" stroke="#8e9097" stroke-width="2" fill="none"/></svg>
<div class="t c" style="left:1550px;width:142px;top:951px;color:#666">1</div>
<div class="cnt" style="top:1115px"><i></i></div>
<svg class="a" style="left:1517px;top:1147px" width="212" height="20"><path d="M0 10H18M190 10H208M199 1V19" stroke="#8e9097" stroke-width="2" fill="none"/></svg>
<div class="t c" style="left:1550px;width:142px;top:1144px;color:#666">1</div>

<div class="ybtn" style="top:939px">移出订单</div>
<div class="ybtn" style="top:1133px">移出订单</div>

<!-- footer -->
<div class="btn" style="left:1425px;top:1351px;width:120px;height:64px;background:#f3f3f3;border:2.5px solid #c8c8cc;color:#9a9a9a">取消</div>
<div class="btn" style="left:1573px;top:1351px;width:204px;height:64px">处理下一个</div>
<div class="btn" style="left:1805px;top:1351px;width:176px;height:64px">确定发货</div>
</body></html>
